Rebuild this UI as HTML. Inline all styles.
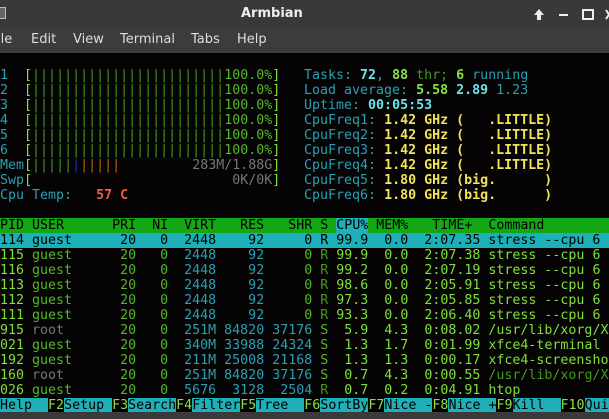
<!DOCTYPE html>
<html><head><meta charset="utf-8"><style>
*{margin:0;padding:0;box-sizing:border-box}
body{width:609px;height:419px;overflow:hidden;background:#000;position:relative;font-family:"DejaVu Sans Mono","Liberation Mono",monospace}
#title{position:absolute;left:0;top:0;width:609px;height:30px;background:#393939;color:#eee;font:bold 13px "DejaVu Sans",sans-serif}
#menu{position:absolute;left:0;top:30px;width:609px;height:23px;background:#3c3c3c;color:#ddd;font:13px "DejaVu Sans",sans-serif}
#menu span{position:absolute;top:2px}
#term{position:absolute;left:0;top:53px;width:609px;height:359px;background:#050303}
.l{position:absolute;left:0;height:15px;line-height:15px;font-size:13.3px;white-space:pre;width:609px;overflow:hidden}
.r{left:304px;width:305px}
.c{color:#2aa1b3}.g{color:#55b82a}.bg{color:#7fe03a}.dg{color:#3f9a1e}.gr{color:#777}
.bl{color:#2233bb}.or{color:#b8641a}.red{color:#ef5a50;font-weight:bold}
.bc{color:#6fe3ec;font-weight:bold}.bgg{color:#8be04a;font-weight:bold}.y{color:#f2e35a;font-weight:bold}
.hd{background:#13a813;color:#000}.sel{background:#1eb0b8;color:#000}
.fk{color:#8be04a;background:#000}.fl{background:#1eb0b8;color:#000}
#bot{position:absolute;left:0;top:412px;width:609px;height:7px;background:#3a3a3a}
</style></head><body>
<div id="title">
<div style="position:absolute;left:-6px;top:7px;width:12px;height:12px;border:1px solid #bbb;background:#666"></div>
<div style="position:absolute;left:241px;top:6px">Armbian</div>
<svg style="position:absolute;left:532px;top:7px" width="77" height="16" viewBox="0 0 77 16">
<path d="M7 2 L2 8 H5 V13 H9 V8 H12 Z" fill="#eee"/>
<rect x="27" y="7" width="9" height="2" fill="#eee"/>
<rect x="51" y="3" width="10" height="9" fill="none" stroke="#eee" stroke-width="2"/>
<path d="M74 3 L80 12 M80 3 L74 12" stroke="#eee" stroke-width="2"/>
</svg>
</div>
<div id="menu"><span style="left:-3px">ile</span><span style="left:31px">Edit</span><span style="left:73px">View</span><span style="left:120px">Terminal</span><span style="left:191px">Tabs</span><span style="left:237px">Help</span></div>
<div id="term"></div>

<div class="l" style="top:68px"><span class="c">1  </span><span class="bg">[</span><span class="dg">||||||||||||||||||||||||</span><span class="g">100.0%</span><span class="bg">]</span></div>
<div class="l" style="top:83px"><span class="c">2  </span><span class="bg">[</span><span class="dg">||||||||||||||||||||||||</span><span class="g">100.0%</span><span class="bg">]</span></div>
<div class="l" style="top:98px"><span class="c">3  </span><span class="bg">[</span><span class="dg">||||||||||||||||||||||||</span><span class="g">100.0%</span><span class="bg">]</span></div>
<div class="l" style="top:113px"><span class="c">4  </span><span class="bg">[</span><span class="dg">||||||||||||||||||||||||</span><span class="g">100.0%</span><span class="bg">]</span></div>
<div class="l" style="top:128px"><span class="c">5  </span><span class="bg">[</span><span class="dg">||||||||||||||||||||||||</span><span class="g">100.0%</span><span class="bg">]</span></div>
<div class="l" style="top:143px"><span class="c">6  </span><span class="bg">[</span><span class="dg">||||||||||||||||||||||||</span><span class="g">100.0%</span><span class="bg">]</span></div>
<div class="l" style="top:158px"><span class="c">Mem</span><span class="bg">[</span><span class="dg">|||||</span><span class="bl">|</span><span class="or">|||||</span>         <span class="gr">283M/1.88G</span><span class="bg">]</span></div>
<div class="l" style="top:173px"><span class="c">Swp</span><span class="bg">[</span>                         <span class="gr">0K/0K</span><span class="bg">]</span></div>
<div class="l" style="top:188px"><span class="c">Cpu Temp:   </span><span class="red">57 C</span></div>

<div class="l r" style="top:68px"><span class="c">Tasks: </span><span class="bc">72</span><span class="c">, </span><span class="bgg">88</span><span class="dg"> thr; </span><span class="bgg">6</span><span class="c"> running</span></div>
<div class="l r" style="top:83px"><span class="c">Load average: </span><span class="bgg">5.58</span> <span class="bc">2.89</span> <span class="c">1.23</span></div>
<div class="l r" style="top:98px"><span class="c">Uptime: </span><span class="bc">00:05:53</span></div>
<div class="l r" style="top:113px"><span class="c">CpuFreq1: </span><span class="y">1.42 GHz (   .LITTLE)</span></div>
<div class="l r" style="top:128px"><span class="c">CpuFreq2: </span><span class="y">1.42 GHz (   .LITTLE)</span></div>
<div class="l r" style="top:143px"><span class="c">CpuFreq3: </span><span class="y">1.42 GHz (   .LITTLE)</span></div>
<div class="l r" style="top:158px"><span class="c">CpuFreq4: </span><span class="y">1.42 GHz (   .LITTLE)</span></div>
<div class="l r" style="top:173px"><span class="c">CpuFreq5: </span><span class="y">1.80 GHz (big.      )</span></div>
<div class="l r" style="top:188px"><span class="c">CpuFreq6: </span><span class="y">1.80 GHz (big.      )</span></div>

<div class="l hd" style="top:218px">PID USER      PRI  NI  VIRT   RES   SHR S <span class="sel">CPU%</span> MEM%   TIME+  Command</div>
<div class="l sel" style="top:233px">114 guest      20   0  2448    92     0 R 99.9  0.0  2:07.35 stress --cpu 6</div>
<div class="l" style="top:248px"><span class="bg">115 </span><span class="g">guest      20   0  </span><span class="c">2448    92</span><span class="g">     0 </span><span class="dg">R</span><span class="bg"> 99.9  0.0  2:07.38 stress --cpu 6</span></div>
<div class="l" style="top:263px"><span class="bg">116 </span><span class="g">guest      20   0  </span><span class="c">2448    92</span><span class="g">     0 </span><span class="dg">R</span><span class="bg"> 99.2  0.0  2:07.19 stress --cpu 6</span></div>
<div class="l" style="top:278px"><span class="bg">113 </span><span class="g">guest      20   0  </span><span class="c">2448    92</span><span class="g">     0 </span><span class="dg">R</span><span class="bg"> 98.6  0.0  2:05.91 stress --cpu 6</span></div>
<div class="l" style="top:293px"><span class="bg">112 </span><span class="g">guest      20   0  </span><span class="c">2448    92</span><span class="g">     0 </span><span class="dg">R</span><span class="bg"> 97.3  0.0  2:05.85 stress --cpu 6</span></div>
<div class="l" style="top:308px"><span class="bg">111 </span><span class="g">guest      20   0  </span><span class="c">2448    92</span><span class="g">     0 </span><span class="dg">R</span><span class="bg"> 93.3  0.0  2:06.40 stress --cpu 6</span></div>
<div class="l" style="top:323px"><span class="bg">915 </span><span class="gr">root       </span><span class="g">20   0  </span><span class="c">251M 84820 37176</span><span class="g"> S </span><span class="bg"> 5.9  4.3  0:08.02 /usr/lib/xorg/X</span></div>
<div class="l" style="top:338px"><span class="bg">021 </span><span class="g">guest      20   0  </span><span class="c">340M 33988 24324</span><span class="g"> S </span><span class="bg"> 1.3  1.7  0:01.99 xfce4-terminal</span></div>
<div class="l" style="top:353px"><span class="bg">192 </span><span class="g">guest      20   0  </span><span class="c">211M 25008 21168</span><span class="g"> S </span><span class="bg"> 1.3  1.3  0:00.17 xfce4-screenshooter</span></div>
<div class="l" style="top:368px"><span class="bg">160 </span><span class="gr">root       </span><span class="g">20   0  </span><span class="c">251M 84820 37176</span><span class="g"> S </span><span class="bg"> 0.7  4.3  0:00.55 </span><span class="dg">/usr/lib/xorg/X</span></div>
<div class="l" style="top:383px"><span class="bg">026 </span><span class="g">guest      20   0  </span><span class="c">5676  3128  2504</span><span class="g"> </span><span class="dg">R</span><span class="bg">  0.7  0.2  0:04.91 htop</span></div>
<div class="l" style="top:398px"><span class="fl">Help  </span><span class="fk">F2</span><span class="fl">Setup </span><span class="fk">F3</span><span class="fl">Search</span><span class="fk">F4</span><span class="fl">Filter</span><span class="fk">F5</span><span class="fl">Tree  </span><span class="fk">F6</span><span class="fl">SortBy</span><span class="fk">F7</span><span class="fl">Nice -</span><span class="fk">F8</span><span class="fl">Nice +</span><span class="fk">F9</span><span class="fl">Kill  </span><span class="fk">F10</span><span class="fl">Quit  </span></div>
<div id="bot"></div>
</body></html>
